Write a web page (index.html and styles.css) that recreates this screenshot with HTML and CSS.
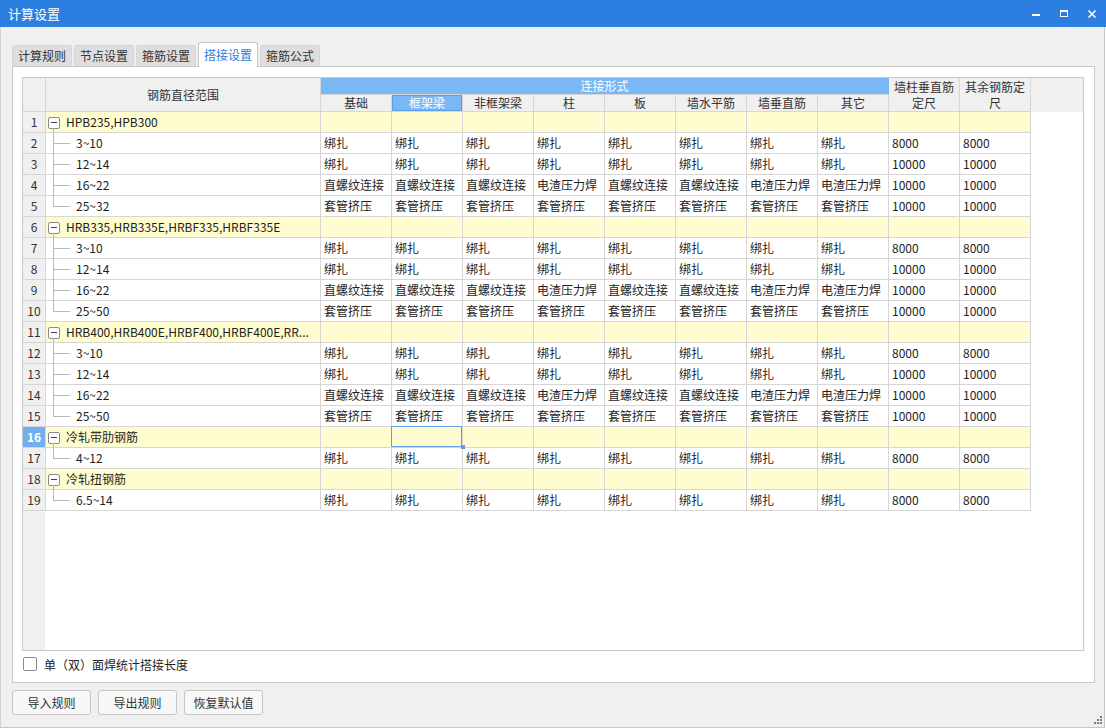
FILE: index.html
```html
<!DOCTYPE html>
<html lang="zh-CN">
<head>
<meta charset="utf-8">
<title>计算设置</title>
<link rel="stylesheet" href="styles.css">
</head>
<body>
<div class="window">
  <div class="titlebar">
    <span class="title">计算设置</span>
    <div class="controls">
      <span class="ctl"><svg width="28" height="27" viewBox="0 0 28 27"><rect x="10" y="14" width="8" height="2" fill="#fff"/></svg></span>
      <span class="ctl"><svg width="28" height="27" viewBox="0 0 28 27"><rect x="10.5" y="10.5" width="7" height="6" fill="none" stroke="#fff" stroke-width="1"/><rect x="10" y="10" width="8" height="2" fill="#fff"/></svg></span>
      <span class="ctl"><svg width="28" height="27" viewBox="0 0 28 27"><path d="M10.5 10.5 L17.5 17.5 M17.5 10.5 L10.5 17.5" stroke="#fff" stroke-width="1.5" fill="none"/></svg></span>
    </div>
  </div>
  <div class="main">
    <div class="tabs">
      <span class="tab">计算规则</span>
      <span class="tab">节点设置</span>
      <span class="tab">箍筋设置</span>
      <span class="tab active">搭接设置</span>
      <span class="tab">箍筋公式</span>
    </div>
    <div class="panel">
      <div class="grid">
        <table class="sheet">
          <colgroup>
            <col class="c-num"><col class="c-range">
            <col class="c-d"><col class="c-d"><col class="c-d"><col class="c-d"><col class="c-d"><col class="c-d"><col class="c-d"><col class="c-d"><col class="c-d"><col class="c-d">
            <col class="c-fill">
          </colgroup>
          <thead>
            <tr class="h1">
              <th rowspan="2" class="hnum"></th>
              <th rowspan="2">钢筋直径范围</th>
              <th colspan="8" class="band">连接形式</th>
              <th rowspan="2" class="wrap">墙柱垂直筋定尺</th>
              <th rowspan="2" class="wrap">其余钢筋定尺</th>
              <th rowspan="2" class="hfill"></th>
            </tr>
            <tr class="h2">
              <th>基础</th><th class="hsel">框架梁</th><th>非框架梁</th><th>柱</th><th>板</th><th>墙水平筋</th><th>墙垂直筋</th><th>其它</th>
            </tr>
          </thead>
          <tbody>
            <tr class="grp"><td class="num">1</td><td class="range"><span class="minus"></span>HPB235,HPB300</td><td></td><td></td><td></td><td></td><td></td><td></td><td></td><td></td><td></td><td></td><td class="fill"></td></tr>
            <tr><td class="num">2</td><td class="range child">3~10</td><td>绑扎</td><td>绑扎</td><td>绑扎</td><td>绑扎</td><td>绑扎</td><td>绑扎</td><td>绑扎</td><td>绑扎</td><td>8000</td><td>8000</td><td class="fill"></td></tr>
            <tr><td class="num">3</td><td class="range child">12~14</td><td>绑扎</td><td>绑扎</td><td>绑扎</td><td>绑扎</td><td>绑扎</td><td>绑扎</td><td>绑扎</td><td>绑扎</td><td>10000</td><td>10000</td><td class="fill"></td></tr>
            <tr><td class="num">4</td><td class="range child">16~22</td><td>直螺纹连接</td><td>直螺纹连接</td><td>直螺纹连接</td><td>电渣压力焊</td><td>直螺纹连接</td><td>直螺纹连接</td><td>电渣压力焊</td><td>电渣压力焊</td><td>10000</td><td>10000</td><td class="fill"></td></tr>
            <tr><td class="num">5</td><td class="range child last">25~32</td><td>套管挤压</td><td>套管挤压</td><td>套管挤压</td><td>套管挤压</td><td>套管挤压</td><td>套管挤压</td><td>套管挤压</td><td>套管挤压</td><td>10000</td><td>10000</td><td class="fill"></td></tr>

            <tr class="grp"><td class="num">6</td><td class="range"><span class="minus"></span>HRB335,HRB335E,HRBF335,HRBF335E</td><td></td><td></td><td></td><td></td><td></td><td></td><td></td><td></td><td></td><td></td><td class="fill"></td></tr>
            <tr><td class="num">7</td><td class="range child">3~10</td><td>绑扎</td><td>绑扎</td><td>绑扎</td><td>绑扎</td><td>绑扎</td><td>绑扎</td><td>绑扎</td><td>绑扎</td><td>8000</td><td>8000</td><td class="fill"></td></tr>
            <tr><td class="num">8</td><td class="range child">12~14</td><td>绑扎</td><td>绑扎</td><td>绑扎</td><td>绑扎</td><td>绑扎</td><td>绑扎</td><td>绑扎</td><td>绑扎</td><td>10000</td><td>10000</td><td class="fill"></td></tr>
            <tr><td class="num">9</td><td class="range child">16~22</td><td>直螺纹连接</td><td>直螺纹连接</td><td>直螺纹连接</td><td>电渣压力焊</td><td>直螺纹连接</td><td>直螺纹连接</td><td>电渣压力焊</td><td>电渣压力焊</td><td>10000</td><td>10000</td><td class="fill"></td></tr>
            <tr><td class="num">10</td><td class="range child last">25~50</td><td>套管挤压</td><td>套管挤压</td><td>套管挤压</td><td>套管挤压</td><td>套管挤压</td><td>套管挤压</td><td>套管挤压</td><td>套管挤压</td><td>10000</td><td>10000</td><td class="fill"></td></tr>

            <tr class="grp"><td class="num">11</td><td class="range"><span class="minus"></span>HRB400,HRB400E,HRBF400,HRBF400E,RR...</td><td></td><td></td><td></td><td></td><td></td><td></td><td></td><td></td><td></td><td></td><td class="fill"></td></tr>
            <tr><td class="num">12</td><td class="range child">3~10</td><td>绑扎</td><td>绑扎</td><td>绑扎</td><td>绑扎</td><td>绑扎</td><td>绑扎</td><td>绑扎</td><td>绑扎</td><td>8000</td><td>8000</td><td class="fill"></td></tr>
            <tr><td class="num">13</td><td class="range child">12~14</td><td>绑扎</td><td>绑扎</td><td>绑扎</td><td>绑扎</td><td>绑扎</td><td>绑扎</td><td>绑扎</td><td>绑扎</td><td>10000</td><td>10000</td><td class="fill"></td></tr>
            <tr><td class="num">14</td><td class="range child">16~22</td><td>直螺纹连接</td><td>直螺纹连接</td><td>直螺纹连接</td><td>电渣压力焊</td><td>直螺纹连接</td><td>直螺纹连接</td><td>电渣压力焊</td><td>电渣压力焊</td><td>10000</td><td>10000</td><td class="fill"></td></tr>
            <tr><td class="num">15</td><td class="range child last">25~50</td><td>套管挤压</td><td>套管挤压</td><td>套管挤压</td><td>套管挤压</td><td>套管挤压</td><td>套管挤压</td><td>套管挤压</td><td>套管挤压</td><td>10000</td><td>10000</td><td class="fill"></td></tr>

            <tr class="grp"><td class="num cur">16</td><td class="range"><span class="minus"></span>冷轧带肋钢筋</td><td></td><td class="sel"></td><td></td><td></td><td></td><td></td><td></td><td></td><td></td><td></td><td class="fill"></td></tr>
            <tr><td class="num">17</td><td class="range child last">4~12</td><td>绑扎</td><td>绑扎</td><td>绑扎</td><td>绑扎</td><td>绑扎</td><td>绑扎</td><td>绑扎</td><td>绑扎</td><td>8000</td><td>8000</td><td class="fill"></td></tr>

            <tr class="grp"><td class="num">18</td><td class="range"><span class="minus"></span>冷轧扭钢筋</td><td></td><td></td><td></td><td></td><td></td><td></td><td></td><td></td><td></td><td></td><td class="fill"></td></tr>
            <tr><td class="num">19</td><td class="range child last">6.5~14</td><td>绑扎</td><td>绑扎</td><td>绑扎</td><td>绑扎</td><td>绑扎</td><td>绑扎</td><td>绑扎</td><td>绑扎</td><td>8000</td><td>8000</td><td class="fill"></td></tr>
          </tbody>
        </table>
      </div>
      <label class="check"><span class="box"></span><span>单（双）面焊统计搭接长度</span></label>
    </div>
    <div class="buttons">
      <button class="btn">导入规则</button>
      <button class="btn">导出规则</button>
      <button class="btn">恢复默认值</button>
    </div>
  </div>
  <svg class="grip" width="9" height="9" viewBox="0 0 9 9"><g fill="#7d7d7d"><rect x="6" y="0" width="2" height="2"/><rect x="3" y="3" width="2" height="2"/><rect x="6" y="3" width="2" height="2"/><rect x="0" y="6" width="2" height="2"/><rect x="3" y="6" width="2" height="2"/><rect x="6" y="6" width="2" height="2"/></g></svg>
</div>
</body>
</html>
```
FILE: styles.css
```css
* { box-sizing: border-box; }
html, body { margin: 0; padding: 0; }
body {
  background: #ffffff;
  font-family: "Noto Sans CJK SC", "Microsoft YaHei", sans-serif;
  font-size: 12px;
  color: #1e1e1e;
}
.window {
  width: 1106px;
  height: 728px;
  display: flex;
  flex-direction: column;
  position: relative;
  background: #ffffff;
}
.titlebar {
  height: 27px;
  flex: none;
  background: #2c7fe0;
  color: #fff;
  display: flex;
  align-items: center;
  padding-left: 8px;
}
.title { font-size: 13px; line-height: 27px; }
.controls { margin-left: auto; display: flex; }
.ctl { width: 28px; height: 27px; display: block; }
.ctl svg { display: block; }

.main {
  flex: 1;
  margin-right: 1px;
  background: #f0f0f0;
  border-left: 1px solid #d2d2d2;
  border-right: 1px solid #c8c8c8;
  border-bottom: 1px solid #c8c8c8;
  padding: 15px 9px 0 11px;
  display: flex;
  flex-direction: column;
}
.tabs {
  height: 24px;
  display: flex;
  align-items: flex-end;
  gap: 2px;
  position: relative;
  z-index: 2;
}
.tab {
  height: 21px;
  line-height: 20px;
  padding: 0 5px;
  background: #dedede;
  border: 1px solid #d6d6d6;
  border-bottom: none;
  border-radius: 3px 3px 0 0;
  color: #333;
  white-space: nowrap;
}
.tab.active {
  height: 25px;
  line-height: 23px;
  margin-bottom: -1px;
  background: #fff;
  border-color: #c6c6c6;
  color: #2a7de0;
}
.panel {
  height: 617px;
  background: #fff;
  border: 1px solid #c9c9c9;
  padding: 10px 10px 0 9px;
  display: flex;
  flex-direction: column;
}
.grid {
  height: 574px;
  border: 1px solid #c8c8c8;
  background: linear-gradient(90deg, #f0f0f0 0, #f0f0f0 22px, #fff 22px);
  overflow: hidden;
}
.sheet {
  border-collapse: separate;
  border-spacing: 0;
  table-layout: fixed;
  width: 100%;
}
.c-num { width: 23px; }
.c-range { width: 275px; }
.c-d { width: 71px; }
.sheet th, .sheet td {
  border-right: 1px solid #d6d6d6;
  border-bottom: 1px solid #d6d6d6;
  padding: 0 3px;
  white-space: nowrap;
  overflow: hidden;
}
.sheet th {
  background: #f0f0f0;
  font-weight: normal;
  color: #333;
  height: 17px;
  line-height: 16px;
  text-align: center;
}
.sheet th.wrap { white-space: normal; line-height: 16px; padding: 0 4px; }
.sheet th.band { background: #7ab7f5; color: #fff; border-right-color: #7ab7f5; }
.sheet th.hsel { background: #7ab7f5; color: #fff; box-shadow: inset 0 0 0 1px #5c9fe9; }
.sheet th.hfill { border: none; }
.sheet td {
  height: 21px;
  line-height: 20px;
  background: #fff;
}
.sheet tr.grp td { background: #fffdcf; }
.sheet td.num {
  background: #f0f0f0;
  text-align: center;
  color: #333;
  padding: 0;
}
.sheet tr.grp td.num { background: #f0f0f0; }
.sheet tr td.num.cur, .sheet tr.grp td.num.cur { background: #72aff1; color: #fff; font-weight: bold; }
.sheet td.fill, .sheet tr.grp td.fill { border: none; background: #fff; }

.sheet td.range { position: relative; padding-left: 2px; overflow: visible; }
.sheet tr.grp td.range::after {
  content: "";
  position: absolute;
  left: 7px;
  top: calc(50% + 6px);
  bottom: -1px;
  border-left: 1px solid #b8b8b8;
}
.minus {
  display: inline-block;
  width: 12px;
  height: 12px;
  border: 1px solid #8a8a8a;
  border-radius: 2px;
  background: #fff;
  vertical-align: -2px;
  margin-right: 6px;
  position: relative;
}
.minus::before {
  content: "";
  position: absolute;
  left: 2px;
  right: 2px;
  top: 4px;
  border-top: 1px solid #444;
}
.sheet td.range.child { padding-left: 30px; }
.sheet td.range.child::before {
  content: "";
  position: absolute;
  left: 7px;
  top: 0;
  bottom: -1px;
  border-left: 1px solid #b8b8b8;
}
.sheet td.range.child.last::before { bottom: auto; height: 50%; }
.sheet td.range.child::after {
  content: "";
  position: absolute;
  left: 7px;
  width: 17px;
  top: 50%;
  border-top: 1px solid #b8b8b8;
}
.sheet td.sel { position: relative; overflow: visible; }
.sheet td.sel::before {
  content: "";
  position: absolute;
  left: -1px;
  top: -1px;
  right: 0;
  bottom: 0;
  border: 1px solid #5c9fe9;
  z-index: 1;
}
.sheet td.sel::after {
  content: "";
  position: absolute;
  right: -3px;
  bottom: -2px;
  width: 4px;
  height: 4px;
  background: #5c9fe9;
  z-index: 1;
}

.check {
  margin-top: 6px;
  height: 14px;
  display: flex;
  align-items: center;
  gap: 7px;
  color: #222;
  padding-left: 1px;
}
.box {
  width: 14px;
  height: 14px;
  border: 1px solid #8a8a8a;
  border-radius: 2px;
  background: #fff;
  flex: none;
}
.buttons {
  margin-top: 7px;
  display: flex;
  gap: 7px;
}
.btn {
  width: 79px;
  height: 25px;
  font: inherit;
  color: #333;
  background: #f8f8f8;
  border: 1px solid #c6c6c6;
  border-radius: 3px;
  padding: 0;
}
.grip {
  position: absolute;
  right: 3px;
  bottom: 3px;
}
```
